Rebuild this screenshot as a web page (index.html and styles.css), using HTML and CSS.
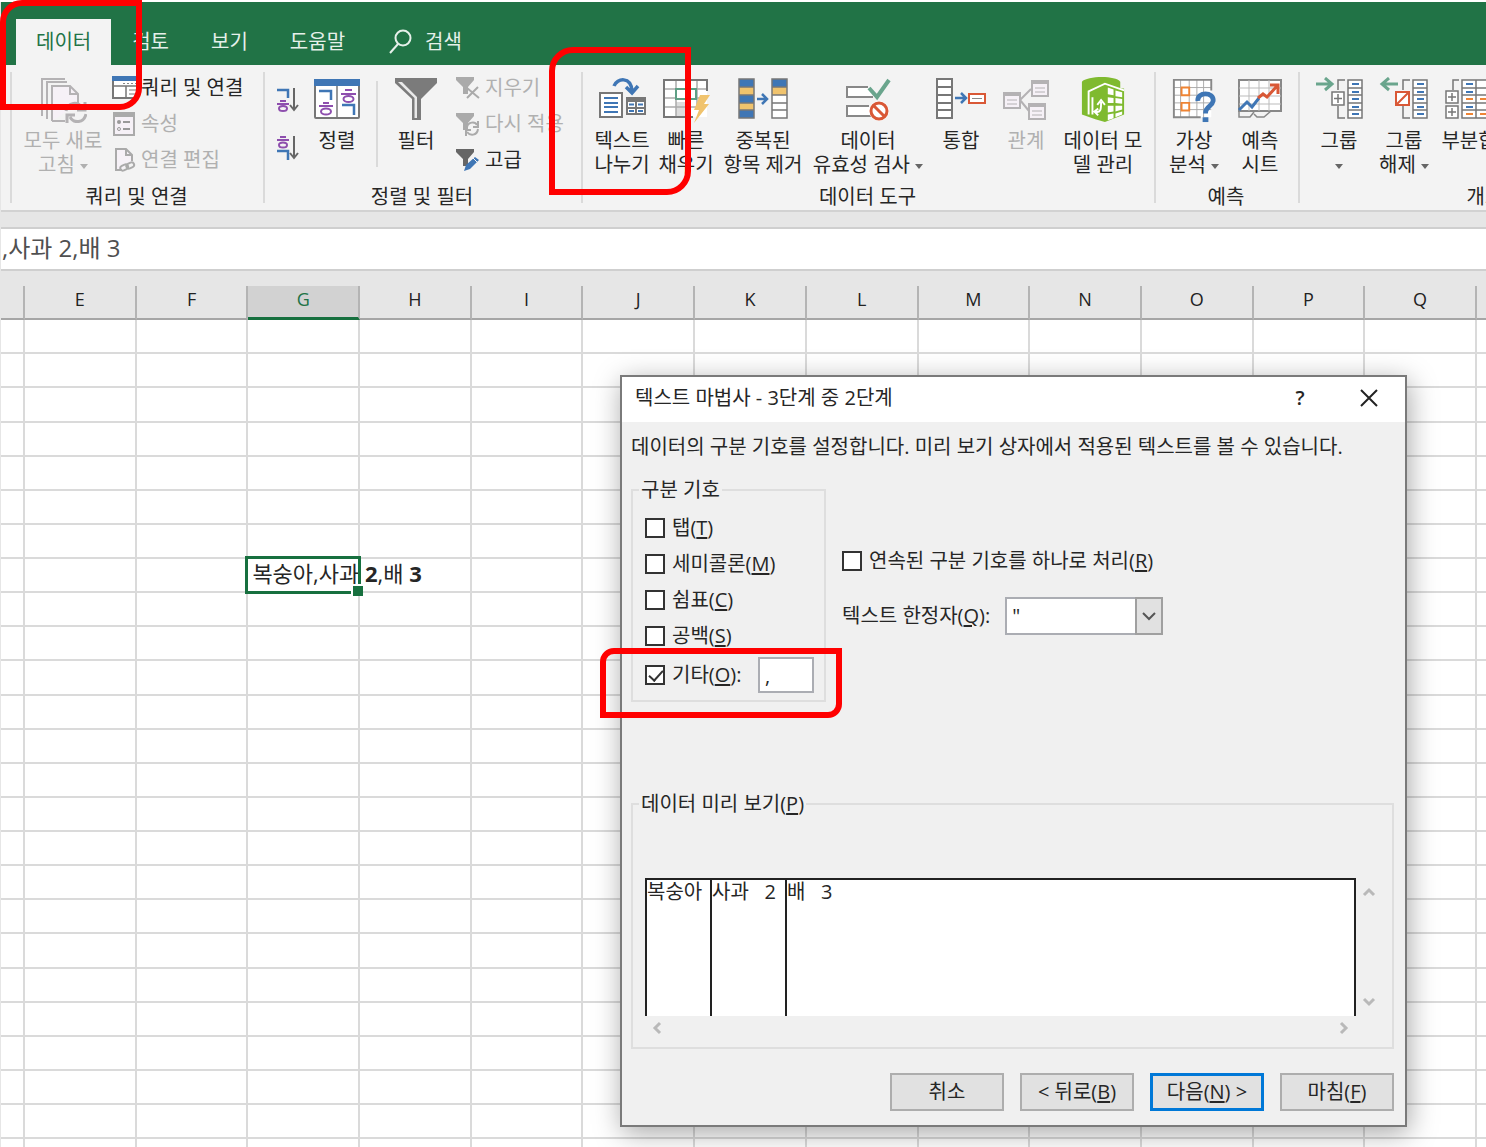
FILE: index.html
```html
<!DOCTYPE html>
<html lang="ko">
<head>
<meta charset="utf-8">
<title>텍스트 마법사</title>
<link rel="stylesheet" href="styles.css">
</head>
<body>
<div class="app">
  <nav class="tabs">
    <button class="tab active">데이터</button>
    <button class="tab">검토</button>
    <button class="tab">보기</button>
    <button class="tab">도움말</button>
    <button class="tab search">
      <svg width="24" height="26" viewBox="0 0 24 26" fill="none" stroke="#e6f0ea" stroke-width="2"><circle cx="14" cy="9" r="7.5"/><path d="M9 15L1 24"/></svg>
      검색
    </button>
  </nav>

  <div class="ribbon">
    <section class="group g-query">
      <div class="tools">
        <button class="big w90" disabled>
          <svg width="48" height="46" viewBox="0 0 48 46" fill="none" stroke="#b4b2b4" stroke-width="2"><path d="M3 39V2H26M8 42V5H28"/><path d="M13 44V9H31L39 17V27M13 44H26" fill="#f6f1f7"/><path d="M31 9V17H39"/><path d="M27 34C29 25 39 24 43 31M46 25V33H38M47 37C45 46 35 47 31 40M28 46V38H36" stroke-width="3"/></svg>
          <span>모두 새로<br>고침 <i class="caret"></i></span>
        </button>
        <div class="stack">
          <button class="small tight">
            <svg width="26" height="24" viewBox="0 0 26 24"><rect x="1" y="3" width="26" height="19" fill="#fff" stroke="#777" stroke-width="2"/><path d="M0 0H26V5H0Z" fill="#3f76b5"/><path d="M1 10H26M14 10V22" stroke="#777" stroke-width="1.5"/><path d="M11 7.500H24" stroke="#888" stroke-dasharray="2 2"/><path d="M17 14H24M17 18H24" stroke="#777"/></svg>
            쿼리 및 연결
          </button>
          <button class="small" disabled>
            <svg width="24" height="24" viewBox="0 0 24 24"><rect x="2" y="1" width="20" height="22" fill="#f6f1f7" stroke="#aaa" stroke-width="2"/><path d="M1 0H23V5H1Z" fill="#aaa"/><path d="M11 10H18M11 17H18" stroke="#999" stroke-width="2"/><circle cx="7" cy="10" r="2" fill="#999"/><circle cx="7" cy="17" r="1.500" fill="none" stroke="#999"/></svg>
            속성
          </button>
          <button class="small" disabled>
            <svg width="24" height="24" viewBox="0 0 24 24" fill="none" stroke="#aaa" stroke-width="2"><path d="M10 22H4V1H14L20 7V13" fill="#f6f1f7"/><path d="M14 1V7H20"/><rect x="8" y="17" width="8" height="5" rx="2.500" transform="rotate(-25 12 19)"/><rect x="14" y="15" width="8" height="5" rx="2.500" transform="rotate(-25 18 17)"/></svg>
            연결 편집
          </button>
        </div>
      </div>
      <div class="group-name">쿼리 및 연결</div>
    </section>

    <section class="group g-sort">
      <div class="tools">
        <div class="sorts">
          <button class="sort" aria-label="오름차순">
            <svg width="26" height="26" viewBox="0 0 26 26" fill="none" stroke-width="2"><path d="M2 3H13V11" stroke="#3f76b5" stroke-width="2.500"/><g stroke="#8e4fae"><path d="M5 14H11M2 17H14"/><ellipse cx="8" cy="21.500" rx="4" ry="2.500"/></g><path d="M19 1V22M15 18L19 23L23 18" stroke="#666"/></svg>
          </button>
          <button class="sort" aria-label="내림차순">
            <svg width="26" height="26" viewBox="0 0 26 26" fill="none" stroke-width="2"><g stroke="#8e4fae"><path d="M5 2H11M2 5H14"/><ellipse cx="8" cy="10" rx="4" ry="2.500"/></g><path d="M2 16H13V25" stroke="#3f76b5" stroke-width="2.500"/><path d="M19 1V22M15 18L19 23L23 18" stroke="#666"/></svg>
          </button>
        </div>
        <button class="big w58">
          <svg width="46" height="46" viewBox="0 0 46 46" fill="none"><rect x="1" y="3" width="44" height="38" rx="1" fill="#fff" stroke="#777" stroke-width="2"/><path d="M0 2H46V9H0Z" fill="#3f76b5"/><path d="M23 9V40" stroke="#777" stroke-width="1.500"/><path d="M5 14H17V23M28 28H40V38" stroke="#3f76b5" stroke-width="2.500"/><g stroke="#8e4fae" stroke-width="2"><path d="M9 26H15M5 29H19M31 13H38M27 17H42"/><ellipse cx="12" cy="34.500" rx="5" ry="3"/><ellipse cx="34.500" cy="22" rx="5" ry="3"/></g></svg>
          <span>정렬</span>
        </button>
        <div class="divider"></div>
        <button class="big w60">
          <svg width="44" height="46" viewBox="0 0 44 46"><path d="M1 1H43V6L27 22V43H18V22L1 6Z" fill="#7b7b7b"/><path d="M4 5L20.500 21V41H23V20L8 5Z" fill="#e9e9e9"/></svg>
          <span>필터</span>
        </button>
        <div class="stack">
          <button class="small" disabled>
            <svg width="24" height="24" viewBox="0 0 24 24"><path d="M0 1H18V4L12 11V18H7V11L0 4Z" fill="#aaa"/><path d="M11 12L23 22M22 11L11 22" stroke="#aaa" stroke-width="2"/></svg>
            지우기
          </button>
          <button class="small" disabled>
            <svg width="24" height="24" viewBox="0 0 24 24"><path d="M0 1H18V4L12 11V18H7V11L0 4Z" fill="#aaa"/><path d="M11 15C12 10 19 9 21 13M22 9V15H17M22 17C21 24 14 24 11 20M10 24V18H15" fill="none" stroke="#aaa" stroke-width="2"/></svg>
            다시 적용
          </button>
          <button class="small">
            <svg width="24" height="24" viewBox="0 0 24 24"><path d="M0 1H18V4L12 11V18H7V11L0 4Z" fill="#666"/><path d="M8 23L10 17L19 9L23 12L14 21Z" fill="#3f76b5"/><path d="M17 10L21 14" stroke="#f3f3f3"/></svg>
            고급
          </button>
        </div>
      </div>
      <div class="group-name">정렬 및 필터</div>
    </section>

    <section class="group g-tools">
      <div class="tools">
        <button class="big w64">
          <svg width="48" height="46" viewBox="0 0 48 46" fill="none"><rect x="2" y="16" width="22" height="24" fill="#fff" stroke="#777" stroke-width="2"/><path d="M6 21H20M6 26H20M6 30H20M6 35H20" stroke="#3f76b5" stroke-width="2"/><path d="M28 20H48V38H28Z" fill="#777"/><path d="M30 25H37V30H30ZM39 25H46V30H39ZM30 32H37V36H30ZM39 32H46V36H39Z" fill="#fff"/><path d="M31 27.500H36M40 27.500H45M31 34H36M40 34H45" stroke="#3f76b5" stroke-width="2"/><path d="M16 9C19 1 33 -1 34 14M28 10L34 16L40 9" stroke="#3f76b5" stroke-width="3.500"/></svg>
          <span>텍스트<br>나누기</span>
        </button>
        <button class="big w64">
          <svg width="48" height="46" viewBox="0 0 48 46" fill="none"><rect x="3" y="3" width="42" height="37" fill="#fff"/><path d="M14 25H25V39H14Z" fill="#ddd"/><path d="M3 12H45M3 21H45M3 30H36M14 3V40M25 3V40M35 3V30" stroke="#aaa" stroke-width="1.500"/><path d="M45 14V3H2V40H31" stroke="#777" stroke-width="2"/><rect x="14" y="12" width="20" height="10" fill="#fff" stroke="#5e9f85" stroke-width="2"/><path d="M38 18H48L42 27H47L32 46L37 33H32Z" fill="#f0c36d"/></svg>
          <span>빠른<br>채우기</span>
        </button>
        <button class="big w90">
          <svg width="52" height="46" viewBox="0 0 52 46"><path d="M2 2H17V41H2Z" fill="#3f76b5"/><path d="M2 10H17V18H2ZM2 26H17V33H2Z" fill="#f0c36d"/><path d="M35 2H50V10H35Z" fill="#3f76b5"/><path d="M35 10H50V18H35Z" fill="#f0c36d"/><path d="M35 18H50V41H35Z" fill="#fff"/><path d="M2 2H17V41H2ZM35 2H50V41H35ZM2 10H17M2 18H17M2 26H17M2 33H17M35 10H50M35 18H50M35 26H50M35 33H50" fill="none" stroke="#777" stroke-width="1.500"/><path d="M20 22H30M25 17L30 22L25 27" fill="none" stroke="#3f76b5" stroke-width="2.500"/></svg>
          <span>중복된<br>항목 제거</span>
        </button>
        <button class="big w120">
          <svg width="46" height="46" viewBox="0 0 46 46" fill="none"><path d="M23 10H2V20H28M24 29H2V39H26" fill="#fff" stroke="#888" stroke-width="2"/><path d="M24 11L32 20L44 3" stroke="#6aa58d" stroke-width="4"/><circle cx="34" cy="34" r="10" fill="#fff"/><circle cx="34" cy="34" r="8" stroke="#d95836" stroke-width="3"/><path d="M28 28L40 40" stroke="#d95836" stroke-width="3"/></svg>
          <span>데이터<br>유효성 검사 <i class="caret"></i></span>
        </button>
        <button class="big w66">
          <svg width="52" height="46" viewBox="0 0 52 46" fill="none"><path d="M2 2H17V41H2ZM2 10H17M2 18H17M2 26H17M2 33H17" fill="#fff" stroke="#777" stroke-width="2"/><path d="M20 21H30M26 16L31 21L26 26" stroke="#3f76b5" stroke-width="2.500"/><rect x="34" y="17" width="16" height="9" fill="#fff" stroke="#d95836" stroke-width="2"/><path d="M37 21.500H47" stroke="#888"/></svg>
          <span>통합</span>
        </button>
        <button class="big w64" disabled>
          <svg width="48" height="46" viewBox="0 0 48 46" fill="none" stroke="#b4b2b4" stroke-width="2"><path d="M18 23L29 12M18 23L27 34"/><path d="M2 16H18V31H2ZM30 4H46V19H30ZM27 27H43V42H27Z" fill="#f6f1f7"/><path d="M1 17H19M29 5H47M26 28H44" stroke-width="4"/><path d="M5 23H15M5 27H15M33 11H43M33 15H43M30 34H40M30 38H40" stroke-width="1"/></svg>
          <span>관계</span>
        </button>
        <button class="big w90">
          <svg width="46" height="48" viewBox="0 0 46 48"><path d="M1 5C6 -1 36 -2 41 5V12H45V39L25 47L15 44L1 39Z" fill="#7fba2f"/><path d="M8 39V15L25 7L45 14" fill="none" stroke="#fff" stroke-width="2"/><path d="M28 11L34 13V19L28 18ZM36 14L43 16V21L36 20ZM28 21L34 22V27H28ZM36 22L43 23V28L36 27ZM28 30H34V36L28 37ZM36 30H43V34L36 36ZM28 39L34 38V43L28 45ZM36 38L43 36V39L36 42Z" fill="#fff"/><path d="M12 21V39M15 36C21 38 21 33 21 26M17 29L21 24L25 29M18 33L14 36L18 40" fill="none" stroke="#fff" stroke-width="2"/></svg>
          <span>데이터 모<br>델 관리</span>
        </button>
      </div>
      <div class="group-name">데이터 도구</div>
    </section>

    <section class="group g-forecast">
      <div class="tools">
        <button class="big w64">
          <svg width="46" height="48" viewBox="0 0 46 48" fill="none"><path d="M2 3H41V42H2Z" fill="#fff"/><path d="M2 11H41M2 19H41M2 27H41M2 34H41M9 3V42M18 3V42M26 3V42M33 3V42" stroke="#aaa" stroke-width="1"/><path d="M41 14V3H2V42H30" stroke="#888" stroke-width="2"/><path d="M10 11H18V19H10ZM10 27H18V35H10Z" fill="#fff" stroke="#ee8434" stroke-width="2"/><path d="M27 25C26 15 44 15 43 25C42 31 35 30 35 38" stroke="#3f76b5" stroke-width="5"/><path d="M32 42H38V47H32Z" fill="#3f76b5"/></svg>
          <span>가상<br>분석 <i class="caret"></i></span>
        </button>
        <button class="big w68">
          <svg width="46" height="46" viewBox="0 0 46 46" fill="none"><path d="M2 3H44V34H2Z" fill="#fff" stroke="#888" stroke-width="2"/><path d="M2 11H44M2 19H44M2 27H44M12 3V34M22 3V34M32 3V34" stroke="#bbb"/><path d="M2 34V40H13L17 35M17 37L20 40H27L34 34" stroke="#888" stroke-width="1.500"/><path d="M2 33L10 25L15 30L22 21" stroke="#3f76b5" stroke-width="3"/><path d="M21 21L26 17L30 20L40 9M33 8H41V17" stroke="#d95836" stroke-width="3"/></svg>
          <span>예측<br>시트</span>
        </button>
      </div>
      <div class="group-name">예측</div>
    </section>

    <section class="group g-outline">
      <div class="tools">
        <button class="big w66">
          <svg width="50" height="46" viewBox="0 0 50 46" fill="none"><path d="M34 3H48V41H34ZM34 11H48M34 18H48M34 26H48M34 33H48" fill="#fff" stroke="#777" stroke-width="1.500"/><path d="M38 7H45M38 15H45M38 22H45M38 30H45M38 37H45" stroke="#3f76b5" stroke-width="2"/><path d="M31 3H24V13M24 29V41H31" stroke="#777" stroke-width="1.500"/><path d="M18 15H30V28H18ZM20 21.500H28M24 17V26" fill="#fff" stroke="#777" stroke-width="1.500"/><path d="M2 7H17M11 1L18 7L11 13" stroke="#6aa58d" stroke-width="3"/></svg>
          <span>그룹<br><i class="caret"></i></span>
        </button>
        <button class="big w64">
          <svg width="50" height="46" viewBox="0 0 50 46" fill="none"><path d="M34 3H48V41H34ZM34 11H48M34 18H48M34 26H48M34 33H48" fill="#fff" stroke="#777" stroke-width="1.500"/><path d="M38 7H45M38 15H45M38 22H45M38 30H45M38 37H45" stroke="#3f76b5" stroke-width="2"/><path d="M31 3H24V13M24 29V41H31" stroke="#777" stroke-width="1.500"/><path d="M17 15H30V28H17ZM17 28L30 15" fill="#fff" stroke="#d95836" stroke-width="2"/><path d="M19 7H4M10 1L3 7L10 13" stroke="#6aa58d" stroke-width="3"/></svg>
          <span>그룹<br>해제 <i class="caret"></i></span>
        </button>
        <button class="big w66">
          <svg width="50" height="46" viewBox="0 0 50 46" fill="none"><path d="M18 3H48V41H18ZM18 11H48M18 18H48M18 26H48M18 33H48M32 3V41" fill="#fff" stroke="#777" stroke-width="1.500"/><path d="M22 7H29M22 15H29M22 30H29" stroke="#3f76b5" stroke-width="2"/><path d="M22 22H29M36 22H44M22 37H29M36 37H44" stroke="#ee8434" stroke-width="2"/><path d="M15 3H9V13" stroke="#777" stroke-width="1.500"/><path d="M2 14H14V26H2ZM4 20H12M8 16V24M2 29H14V41H2ZM4 35H12M8 31V39" fill="#fff" stroke="#777" stroke-width="1.500"/></svg>
          <span>부분합</span>
        </button>
      </div>
      <div class="group-name">개요</div>
    </section>
  </div>

  <div class="formula">,사과 2,배 3</div>

  <main class="sheet">
    <table class="grid">
      <colgroup><col class="edge-left"><col span="13"><col class="edge-right"></colgroup>
      <thead>
        <tr><th></th><th>E</th><th>F</th><th class="picked">G</th><th>H</th><th>I</th><th>J</th><th>K</th><th>L</th><th>M</th><th>N</th><th>O</th><th>P</th><th>Q</th><th></th></tr>
      </thead>
      <tbody id="rows"></tbody>
    </table>
  </main>
</div>

<form class="dialog" role="dialog" aria-labelledby="dialog-title" onsubmit="return false">
  <header class="titlebar">
    <h1 id="dialog-title">텍스트 마법사 - 3단계 중 2단계</h1>
    <button type="button" class="help">?</button>
    <button type="button" class="close" aria-label="닫기"><svg width="18" height="18" viewBox="0 0 18 18" stroke="#222" stroke-width="2"><path d="M1 1L17 17M17 1L1 17"/></svg></button>
  </header>
  <div class="body">
    <p class="message">데이터의 구분 기호를 설정합니다. 미리 보기 상자에서 적용된 텍스트를 볼 수 있습니다.</p>
    <div class="options">
      <fieldset class="delimiters">
        <legend>구분 기호</legend>
        <label class="check"><input type="checkbox">탭(<u>T</u>)</label>
        <label class="check"><input type="checkbox">세미콜론(<u>M</u>)</label>
        <label class="check"><input type="checkbox">쉼표(<u>C</u>)</label>
        <label class="check"><input type="checkbox">공백(<u>S</u>)</label>
        <div class="other">
          <label class="check"><input type="checkbox" checked>기타(<u>O</u>):</label>
          <input type="text" class="other-char" value="," aria-label="기타 구분 기호">
        </div>
      </fieldset>
      <div class="extras">
        <label class="check"><input type="checkbox">연속된 구분 기호를 하나로 처리(<u>R</u>)</label>
        <div class="qualifier">
          <label for="qualifier">텍스트 한정자(<u>Q</u>):</label>
          <div class="combo">
            <select id="qualifier"><option>"</option><option>'</option></select>
            <span class="combo-arrow"><svg width="14" height="9" viewBox="0 0 14 9" fill="none" stroke="#555" stroke-width="2"><path d="M1 1L7 7L13 1"/></svg></span>
          </div>
        </div>
      </div>
    </div>
    <fieldset class="preview">
      <legend>데이터 미리 보기(<u>P</u>)</legend>
      <div class="viewer">
        <table class="sample"><tbody><tr><td class="c1">복숭아</td><td class="c2">사과   2</td><td>배   3</td></tr></tbody></table>
        <div class="vbar">
          <svg width="14" height="10" viewBox="0 0 14 10"><path d="M2 8L7 3L12 8"/></svg>
          <svg width="14" height="10" viewBox="0 0 14 10"><path d="M2 2L7 7L12 2"/></svg>
        </div>
        <div class="hbar">
          <svg width="10" height="14" viewBox="0 0 10 14"><path d="M8 2L3 7L8 12"/></svg>
          <svg width="10" height="14" viewBox="0 0 10 14"><path d="M2 2L7 7L2 12"/></svg>
        </div>
      </div>
    </fieldset>
    <footer class="actions">
      <button type="button">취소</button>
      <button type="button">&lt; 뒤로(<u>B</u>)</button>
      <button type="submit" class="primary">다음(<u>N</u>) &gt;</button>
      <button type="button">마침(<u>F</u>)</button>
    </footer>
  </div>
</form>

<div class="mark mark-tab"></div>
<div class="mark mark-split"></div>
<div class="mark mark-other"></div>
<script src="sheet.js"></script>
</body>
</html>
```

FILE: styles.css
```css
* { box-sizing: border-box; }

body {
  margin: 0;
  background: #fff;
  color: #262626;
  font: 20px/24px "Open Sans", "Noto Sans CJK KR", sans-serif;
}

button, input, select { font: inherit; color: inherit; }
button { padding: 0; border: 0; background: none; white-space: nowrap; }

.app {
  display: flex;
  flex-direction: column;
  height: 100vh;
  padding: 2px 0 0 1px;
  background: linear-gradient(#fff 2px, #e6e6e6 2px);
  overflow: hidden;
}

/* Ribbon tabs */
.tabs {
  display: flex;
  flex: none;
  height: 63px;
  padding: 17px 0 0 15px;
  background: #217346;
}
.tab { padding: 0 21px; color: #e6f0ea; }
.tab.active { padding: 0 20px; background: #f3f3f3; color: #217346; }
.search { display: flex; align-items: center; gap: 12px; padding-left: 23px; }

/* Ribbon */
.ribbon {
  display: flex;
  flex: none;
  height: 147px;
  padding-left: 9px;
  background: #f3f3f3;
  border-bottom: 2px solid #d2d2d2;
  overflow: hidden;
}
.group { position: relative; display: flex; flex: none; flex-direction: column; }
.group::before {
  content: "";
  position: absolute;
  left: 0;
  top: 7px;
  bottom: 7px;
  width: 2px;
  background: #dadada;
}
.g-query { width: 253px; }
.g-sort { width: 318px; }
.g-tools { width: 573px; }
.g-forecast { width: 144px; }
.g-outline { width: 374px; }

.tools { display: flex; height: 120px; padding-left: 8px; }
.g-tools .tools { padding-left: 9px; }
.group-name { text-align: center; }

.big {
  display: flex;
  flex: none;
  flex-direction: column;
  align-items: center;
  gap: 6px;
  padding-top: 12px;
}
.big svg { flex: none; height: 46px; }
.w58 { width: 58px; }
.w60 { width: 60px; }
.w64 { width: 64px; }
.w66 { width: 66px; }
.w68 { width: 68px; }
.w90 { width: 90px; }
.w120 { width: 120px; }
button:disabled { color: #b0b0b0; }

.caret {
  display: inline-block;
  vertical-align: middle;
  border: 4px solid transparent;
  border-top: 5px solid #666;
  border-bottom: 0;
}
button:disabled .caret { border-top-color: #b0b0b0; }

.stack { display: flex; flex-direction: column; padding: 5px 0 0 4px; }
.g-sort .stack { padding-left: 10px; }
.small { display: flex; align-items: center; gap: 5px; height: 36px; }
.small.tight { gap: 3px; }
.sorts { display: flex; flex-direction: column; gap: 22px; padding: 22px 7px 0 4px; }
.sort { height: 26px; }
.sort svg { display: block; }
.divider { width: 2px; height: 86px; margin: 16px 8px 0 10px; background: #dadada; }

/* Formula bar */
.formula {
  flex: none;
  height: 44px;
  margin-top: 15px;
  padding-left: 1px;
  border: solid #cfcfcf;
  border-width: 2px 0;
  background: #fff;
  color: #505050;
  font-size: 24px;
  line-height: 38px;
}

/* Worksheet */
.sheet { flex: 1; padding-top: 15px; overflow: hidden; }
.grid {
  width: 100%;
  table-layout: fixed;
  border-collapse: separate;
  border-spacing: 0;
  background: #fff;
}
.edge-left { width: 24px; }
.edge-right { width: 9px; }
.grid th {
  height: 34px;
  padding: 0 0 6px;
  border-right: 2px solid #b4b4b4;
  border-bottom: 2px solid #a6a6a6;
  background: #e6e6e6;
  color: #222;
  font-size: 18px;
  font-weight: 400;
  line-height: 24px;
}
.grid th.picked { background: #d2d2d2; border-bottom: 3px solid #17703f; color: #217346; }
.grid td {
  height: 34px;
  padding: 0;
  border: solid #dadada;
  border-width: 0 2px 2px 0;
}
.grid tr:nth-child(8n + 3) td { height: 35px; }
.grid th:last-child, .grid td:last-child { border-right: 0; }
.grid td.selected {
  position: relative;
  padding: 0 0 4px 4px;
  font-size: 22px;
  line-height: 28px;
  white-space: nowrap;
}
.selected::before {
  content: "";
  position: absolute;
  inset: -3px;
  border: 3px solid #17703f;
}
.selected::after {
  content: "";
  position: absolute;
  right: -5px;
  bottom: -5px;
  width: 10px;
  height: 10px;
  border: solid #fff;
  border-width: 2px 0 0 2px;
  background: #17703f;
}

/* Wizard window */
.dialog {
  position: absolute;
  left: 620px;
  top: 375px;
  width: 787px;
  border: 2px solid #7a7a7a;
  background: #f0f0f0;
  box-shadow: 2px 6px 26px rgba(0, 0, 0, 0.35);
}
.titlebar {
  display: flex;
  align-items: center;
  height: 45px;
  padding: 0 27px 3px 13px;
  background: #fff;
}
.titlebar h1 { flex: 1; margin: 0; font-size: 20px; font-weight: 400; line-height: 24px; }
.help { width: 20px; margin-right: 50px; font-weight: 600; }
.close svg { display: block; }
.body { padding: 13px 11px 14px 9px; }
.message { margin: 0; white-space: nowrap; }
.options { display: flex; gap: 16px; margin-top: 19px; }

fieldset { min-width: 0; margin: 0; border: 2px solid #dedede; }
legend { padding: 0 2px; line-height: 24px; }
u { text-underline-offset: 2px; }

.delimiters { width: 195px; padding: 8px 10px 4px 12px; }
.delimiters legend, .preview legend { margin-left: -6px; }
.check { display: flex; align-items: center; height: 36px; white-space: nowrap; }
.check input {
  position: relative;
  flex: none;
  appearance: none;
  width: 20px;
  height: 20px;
  margin: 0 7px 0 0;
  border: 2px solid #333;
  background: #fff;
}
.check input:checked::after {
  content: "";
  position: absolute;
  left: 5px;
  top: 0;
  width: 6px;
  height: 12px;
  border: solid #333;
  border-width: 0 2px 2px 0;
  transform: rotate(42deg);
}
.other { display: flex; align-items: center; justify-content: space-between; height: 42px; }
.other-char {
  width: 56px;
  height: 36px;
  padding: 0 5px;
  border: 2px solid #abadb3;
  background: #fff;
}
.extras { display: flex; flex-direction: column; gap: 18px; padding-top: 65px; }
.qualifier { display: flex; align-items: center; gap: 15px; }
.combo { position: relative; }
.combo select {
  display: block;
  appearance: none;
  width: 158px;
  height: 38px;
  padding: 0 5px;
  border: 2px solid #abadb3;
  border-radius: 0;
  background: #fff;
}
.combo-arrow {
  position: absolute;
  right: 0;
  top: 0;
  display: grid;
  place-items: center;
  width: 28px;
  height: 38px;
  border: 2px solid #a0a0a0;
  background: #e1e1e1;
  pointer-events: none;
}

.preview { margin-top: 90px; padding: 62px 10px 7px 12px; }
.viewer { display: grid; grid-template-columns: 1fr 26px; }
.sample {
  width: 100%;
  height: 138px;
  border-collapse: separate;
  border-spacing: 0;
  border: solid #222;
  border-width: 2px 2px 0;
  background: #fff;
}
.sample td { padding: 0; vertical-align: top; white-space: pre; }
.sample .c1 { width: 65px; border-right: 2px solid #222; }
.sample .c2 { width: 75px; border-right: 2px solid #222; }
.vbar, .hbar { display: flex; justify-content: space-between; }
.vbar { flex-direction: column; align-items: center; padding: 9px 0; }
.hbar { padding: 5px 7px; }
.viewer svg { fill: none; stroke: #b9b9b9; stroke-width: 3px; }

.actions { display: flex; justify-content: flex-end; gap: 16px; margin-top: 24px; }
.actions button {
  width: 114px;
  height: 38px;
  border: 2px solid #adadad;
  background: #e1e1e1;
}
.actions .primary { border: 3px solid #0078d7; }

/* Red callouts over the window */
.mark { position: absolute; border: 6px solid #f00; pointer-events: none; }
.mark-tab { left: 0; top: 0; width: 142px; height: 110px; border-radius: 22px 0; }
.mark-split { left: 549px; top: 47px; width: 142px; height: 148px; border-radius: 24px 0; }
.mark-other { left: 600px; top: 648px; width: 242px; height: 70px; border-radius: 14px 0; }
```

FILE: sheet.js
```js
const body = document.getElementById("rows");
for (let r = 0; r < 25; r++) {
  const row = body.insertRow();
  for (let c = 0; c < 15; c++) row.insertCell();
}
const cell = body.rows[7].cells[3];
cell.className = "selected";
cell.innerHTML = "복숭아,사과 <b>2</b>,배 <b>3</b>";
```
